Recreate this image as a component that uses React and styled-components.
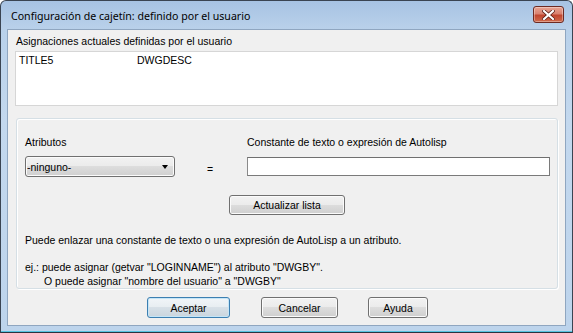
import React from "react"
import styled, { createGlobalStyle } from "styled-components"

const Global = createGlobalStyle`
  html, body { margin: 0; padding: 0; background: #ffffff; }
  body { font-family: "Liberation Sans", Arial, sans-serif; font-size: 10.5px; color: #000; }
`

const Window = styled.div`
  width: 573px;
  height: 333px;
  box-sizing: border-box;
  border: 1px solid #3a4452;
  border-bottom-color: #2a3440;
  border-radius: 6px 6px 0 0;
  background: linear-gradient(to bottom, #a7c3e3 0px, #b9d1ea 28px, #c3d8ee 120px, #bdd4ec 100%);
  display: flex;
  flex-direction: column;
  box-shadow: inset 0 -1px 0 #57c3df;
`

const TitleBar = styled.div`
  height: 28px;
  display: flex;
  align-items: center;
  justify-content: space-between;
  padding: 0 8px 0 10px;
`

const Title = styled.span`
  font-family: "Noto Sans", "Open Sans", sans-serif;
  font-size: 10.6px;
  color: #000;
  padding-top: 1px;
`

const CloseButton = styled.div`
  width: 31px;
  height: 17px;
  box-sizing: border-box;
  margin-top: -1px;
  border: 1px solid #6d2a22;
  border-radius: 3px;
  background: linear-gradient(to bottom, #e8a493 0%, #d98270 45%, #c1462f 55%, #cf6a4c 100%);
  box-shadow: inset 0 0 0 1px rgba(255, 255, 255, 0.35);
  display: flex;
  align-items: center;
  justify-content: center;
`

const Client = styled.div`
  flex: 1;
  margin: 0 6px 6px 6px;
  border: 1px solid #8fa6c0;
  background: #f0f0f0;
  padding: 4px 0 0 0;
  display: flex;
  flex-direction: column;
`

const Label = styled.div`
  line-height: 14px;
  padding-left: ${p => p.$indent || 0}px;
  white-space: pre;
`

const ListBox = styled.div`
  margin: 3px 7px 0 7px;
  height: 51px;
  background: #ffffff;
  border: 1px solid #d6d6d6;
  padding: 1px 3px;
  display: flex;
`

const Cell = styled.span`
  width: ${p => p.$w}px;
  line-height: 14px;
`

const Group = styled.div`
  margin: 12px 7px 0 8px;
  height: 171px;
  box-sizing: border-box;
  border: 1px solid #d5dfe5;
  border-radius: 3px;
  box-shadow: inset 1px 1px 0 #ffffff, 1px 1px 0 #ffffff;
  padding: 16px 0 0 8px;
  display: flex;
  flex-direction: column;
`

const FieldGrid = styled.div`
  display: grid;
  grid-template-columns: 150px 72px 303px;
  grid-template-rows: 14px 21px;
  row-gap: 7px;
  align-items: center;
`

const Equals = styled.span`
  padding: 5px 0 0 32px;
`

const Combo = styled.div`
  height: 21px;
  box-sizing: border-box;
  border: 1px solid #707070;
  border-radius: 3px;
  background: linear-gradient(to bottom, #f2f2f2 0%, #ebebeb 50%, #dddddd 50%, #cfcfcf 100%);
  box-shadow: inset 0 0 0 1px #fbfbfb;
  display: flex;
  align-items: center;
  justify-content: space-between;
  padding: 0 6px 0 1px;
`

const Arrow = styled.span`
  width: 0;
  height: 0;
  border-left: 3.5px solid transparent;
  border-right: 3.5px solid transparent;
  border-top: 4px solid #000;
`

const TextInput = styled.div`
  height: 19px;
  box-sizing: border-box;
  background: #ffffff;
  border: 1px solid #7a7a7a;
  border-top-color: #6f6f6f;
  border-left-color: #8a8a8a;
`

const CenterRow = styled.div`
  display: flex;
  justify-content: center;
  margin-top: ${p => p.$top}px;
  padding-right: 8px;
`

const Button = styled.div`
  width: ${p => p.$w}px;
  height: ${p => p.$h || 21}px;
  box-sizing: border-box;
  border: 1px solid ${p => (p.$default ? "#3c7fb1" : "#707070")};
  border-radius: 3px;
  background: ${p =>
    p.$default
      ? "linear-gradient(to bottom, #f1f5f8 0%, #e7edf1 50%, #d7e0e7 50%, #cad5de 100%)"
      : "linear-gradient(to bottom, #f2f2f2 0%, #ebebeb 50%, #dddddd 50%, #cfcfcf 100%)"};
  box-shadow: inset 0 0 0 1px ${p => (p.$default ? "#c5e5f7" : "#fbfbfb")};
  display: flex;
  align-items: center;
  justify-content: center;
  line-height: 14px;
`

const Note = styled.div`
  margin-top: ${p => p.$top}px;
`

const ButtonBar = styled.div`
  display: flex;
  margin-top: 8px;
  padding-left: 139px;
`

const Spacer = styled.span`
  width: ${p => p.$w}px;
`

export default function App() {
  return (
    <>
      <Global />
      <Window>
        <TitleBar>
          <Title>Configuración de cajetín: definido por el usuario</Title>
          <CloseButton>
            <svg width="13" height="10" viewBox="0 0 13 10">
              <path
                d="M2 1 L11 9 M11 1 L2 9"
                stroke="#5a1d14"
                strokeWidth="3.6"
                strokeLinecap="square"
              />
              <path
                d="M2 1 L11 9 M11 1 L2 9"
                stroke="#ffffff"
                strokeWidth="2.2"
                strokeLinecap="square"
              />
            </svg>
          </CloseButton>
        </TitleBar>
        <Client>
          <Label $indent={8}>Asignaciones actuales definidas por el usuario</Label>
          <ListBox>
            <Cell $w={118}>TITLE5</Cell>
            <Cell $w={100}>DWGDESC</Cell>
          </ListBox>
          <Group>
            <FieldGrid>
              <Label>Atributos</Label>
              <span />
              <Label>Constante de texto o expresión de Autolisp</Label>
              <Combo>
                <span>-ninguno-</span>
                <Arrow />
              </Combo>
              <Equals>=</Equals>
              <TextInput />
            </FieldGrid>
            <CenterRow $top={18}>
              <Button $w={116} $h={20}>Actualizar lista</Button>
            </CenterRow>
            <Note $top={19}>
              Puede enlazar una constante de texto o una expresión de AutoLisp a un atributo.
            </Note>
            <Note $top={14}>
              <Label>ej.: puede asignar (getvar "LOGINNAME") al atributo "DWGBY".</Label>
              <Label $indent={19}>O puede asignar "nombre del usuario" a "DWGBY"</Label>
            </Note>
          </Group>
          <ButtonBar>
            <Button $w={83} $default>Aceptar</Button>
            <Spacer $w={31} />
            <Button $w={77}>Cancelar</Button>
            <Spacer $w={30} />
            <Button $w={60}>Ayuda</Button>
          </ButtonBar>
        </Client>
      </Window>
    </>
  )
}
